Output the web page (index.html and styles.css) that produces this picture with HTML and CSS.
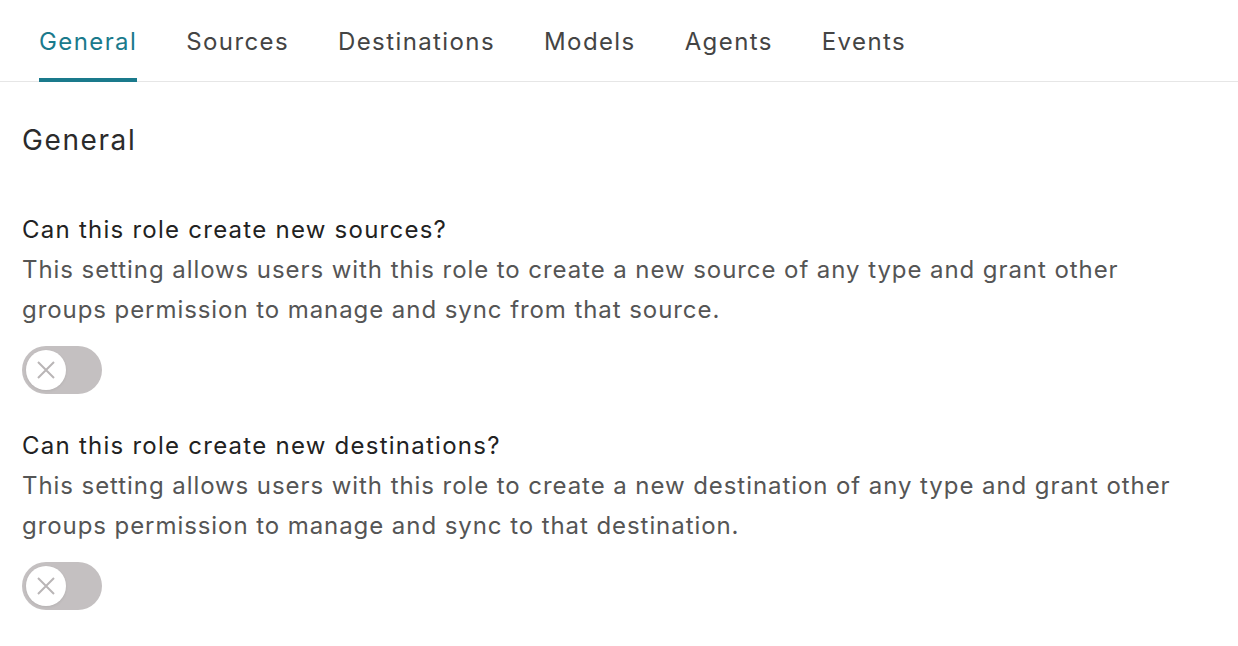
FILE: index.html
```html
<html>
	<head>
		<title>Role permissions</title>
		<link rel="stylesheet" href="styles.css">
	</head>
	<body>
		<div class="tabs">
			<div class="tab active">General</div>
			<div class="tab">Sources</div>
			<div class="tab">Destinations</div>
			<div class="tab">Models</div>
			<div class="tab">Agents</div>
			<div class="tab">Events</div>
		</div>
		<div class="panel">
			<h2 class="panel_title">General</h2>

			<div class="setting">
				<div class="setting_label">Can this role create new sources?</div>
				<div class="setting_help">This setting allows users with this role to create a new source of any type and grant other groups permission to manage and sync from that source.</div>
				<div class="toggle">
					<span class="knob">
						<svg width="20" height="20" viewBox="0 0 20 20"><path d="M2 2 L18 18 M18 2 L2 18" stroke="#b9b5b6" stroke-width="2" fill="none"/></svg>
					</span>
				</div>
			</div>

			<div class="setting">
				<div class="setting_label">Can this role create new destinations?</div>
				<div class="setting_help">This setting allows users with this role to create a new destination of any type and grant other groups permission to manage and sync to that destination.</div>
				<div class="toggle">
					<span class="knob">
						<svg width="20" height="20" viewBox="0 0 20 20"><path d="M2 2 L18 18 M18 2 L2 18" stroke="#b9b5b6" stroke-width="2" fill="none"/></svg>
					</span>
				</div>
			</div>
		</div>
	</body>
</html>
```

FILE: styles.css
```css
body,html{
	margin:0;
	font-family:Inter, "Liberation Sans", sans-serif;
	background:#fff;
}
.tabs{
	display:flex;
	gap:49px;
	padding:0 39px;
	height:81px;
	border-bottom:1px solid #e6e6e6;
}
.tab{
	font-size:24px;
	letter-spacing:1.4px;
	color:#444;
	padding-top:27px;
	box-sizing:border-box;
	height:82px;
	border-bottom:4px solid transparent;
}
.tab.active{
	color:#1a7a8c;
	border-bottom-color:#1a7a8c;
}
.panel{
	padding:38px 22px 0;
}
.panel_title{
	margin:0 0 50px;
	font-size:28px;
	letter-spacing:1.6px;
	font-weight:normal;
	color:#2b2b2b;
	line-height:40px;
}
.setting{
	margin-bottom:32px;
}
.setting_label{
	font-size:24px;
	letter-spacing:1.25px;
	color:#222;
	line-height:40px;
}
.setting_help{
	font-size:24px;
	letter-spacing:0.93px;
	color:#555;
	line-height:40px;
	max-width:1150px;
}
.toggle{
	margin-top:16px;
	width:80px;
	height:48px;
	border-radius:24px;
	background:#c4c0c1;
	display:flex;
	align-items:center;
	padding-left:4px;
	box-sizing:border-box;
}
.knob{
	width:40px;
	height:40px;
	border-radius:50%;
	background:#fff;
	display:flex;
	align-items:center;
	justify-content:center;
	box-shadow:0 1px 3px rgba(0,0,0,0.08);
}
```
